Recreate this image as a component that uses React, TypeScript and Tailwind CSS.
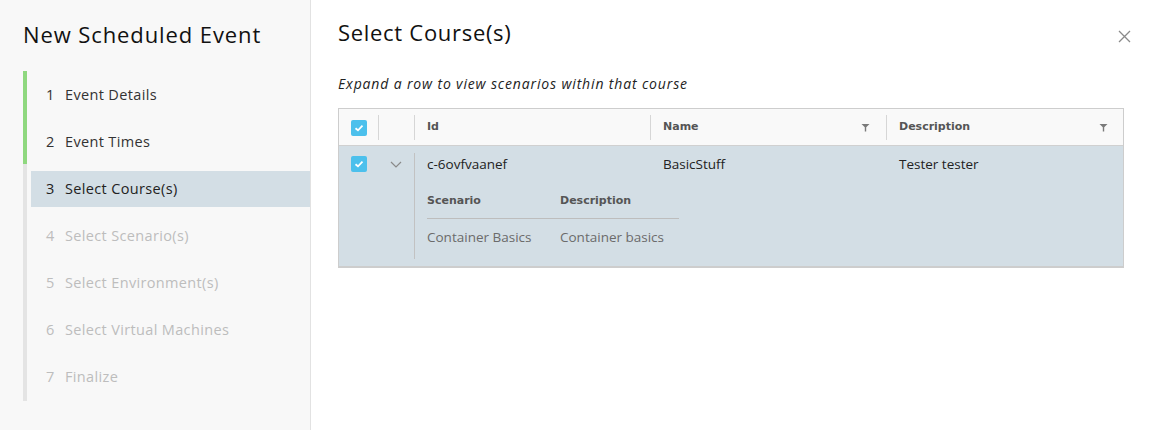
const steps = [
  { n: 1, label: "Event Details", state: "done" },
  { n: 2, label: "Event Times", state: "done" },
  { n: 3, label: "Select Course(s)", state: "active" },
  { n: 4, label: "Select Scenario(s)", state: "todo" },
  { n: 5, label: "Select Environment(s)", state: "todo" },
  { n: 6, label: "Select Virtual Machines", state: "todo" },
  { n: 7, label: "Finalize", state: "todo" },
];

const Check = () => (
  <span className="flex h-4 w-4 items-center justify-center rounded-[2px] bg-[#4cc0ec]">
    <svg width="10" height="8" viewBox="0 0 10 8" fill="none">
      <path d="M1.5 4.2 L4 6.3 L8.5 1.7" stroke="white" strokeWidth="1.8" />
    </svg>
  </span>
);

const Filter = () => (
  <svg width="9" height="9" viewBox="0 0 9 9">
    <path d="M0.5 1 H8.5 L5.2 4.2 V8.5 H3.8 V4.2 Z" fill="#7a7a7a" />
  </svg>
);

const Divider = () => <span className="h-[25px] w-px bg-[#d6d6d6]" />;

export default function App() {
  return (
    <div className="flex h-[430px] w-[1149px] bg-white font-['Open_Sans',sans-serif] text-[#222]">
      {/* Steps */}
      <aside className="flex w-[311px] shrink-0 flex-col border-r border-[#e2e2e2] bg-[#f8f8f8] pl-[23px]">
        <h1 className="mt-[19px] text-[22px] leading-[30px] tracking-[0.9px] text-[#111]">New Scheduled Event</h1>
        <div className="relative mt-[22px] flex flex-col gap-[11px] py-[6px] pl-[8px]">
          <span className="absolute left-0 top-0 h-full w-1 bg-[#e4e4e4]" />
          <span className="absolute left-0 top-0 h-[93px] w-1 bg-[#8fd87f]" />
          {steps.map((s) => (
            <div
              key={s.n}
              className={`flex h-9 items-center gap-[13px] pl-[15px] text-[14.5px] tracking-[0.35px] ${
                s.state === "active" ? "bg-[#d3dee5] text-[#222]" : s.state === "done" ? "text-[#333]" : "text-[#bdbdbd]"
              }`}
            >
              <span className="w-[6px]">{s.n}</span>
              <span>{s.label}</span>
            </div>
          ))}
        </div>
      </aside>

      {/* Content */}
      <main className="flex flex-1 flex-col pl-[27px] pr-[25px]">
        <div className="-mr-[7px] flex items-start justify-between">
          <h2 className="mt-[17px] text-[22px] leading-[30px] tracking-[0.7px] text-[#111]">Select Course(s)</h2>
          <svg className="mt-[30px]" width="13" height="13" viewBox="0 0 13 13">
            <path d="M1 1 L12 12 M12 1 L1 12" stroke="#8a8a8a" strokeWidth="1.3" />
          </svg>
        </div>
        <p className="mt-[28px] text-[14px] italic leading-[18px] tracking-[0.85px] text-[#222]">
          Expand a row to view scenarios within that course
        </p>

        <div className="mt-[15px] border border-b-2 border-[#cdcdcd]">
          <div className="flex h-[37px] items-center border-b border-[#d0d0d0] bg-[#f9f9f9] pt-[1px] text-[11px] font-bold text-[#555] font-['DejaVu_Sans',sans-serif]">
            <div className="flex w-[39px] items-center justify-center pl-[1px]">
              <Check />
            </div>
            <Divider />
            <div className="w-[35px]" />
            <Divider />
            <div className="flex w-[235px] items-center pl-3">Id</div>
            <Divider />
            <div className="flex w-[235px] items-center justify-between pl-3 pr-[16px]">
              Name <Filter />
            </div>
            <Divider />
            <div className="flex flex-1 items-center justify-between pl-3 pr-[15px]">
              Description <Filter />
            </div>
          </div>

          <div className="flex h-[120px] bg-[#d3dee5] text-[13.5px]">
            <div className="flex w-[39px] justify-center pl-[1px] pt-[10px]">
              <Check />
            </div>
            <div className="flex w-[36px] justify-center pt-[15px]">
              <svg width="12" height="7" viewBox="0 0 12 7">
                <path d="M1 1 L6 6 L11 1" stroke="#8a8a8a" strokeWidth="1.2" fill="none" />
              </svg>
            </div>
            <div className="my-[7px] flex flex-1 flex-col border-l border-[#c2c2c2]">
              <div className="flex h-[22px] items-center">
                <span className="w-[236px] pl-3">c-6ovfvaanef</span>
                <span className="w-[236px] pl-3">BasicStuff</span>
                <span className="pl-3">Tester tester</span>
              </div>
              <div className="ml-3 mt-[18px] w-[252px]">
                <div className="flex h-[26px] items-start border-b border-[#bdbdbd] text-[11px] font-bold text-[#555] font-['DejaVu_Sans',sans-serif]">
                  <span className="w-[133px]">Scenario</span>
                  <span>Description</span>
                </div>
                <div className="flex h-[36px] items-center text-[#6b6b6b]">
                  <span className="w-[133px]">Container Basics</span>
                  <span>Container basics</span>
                </div>
              </div>
            </div>
          </div>
        </div>
      </main>
    </div>
  );
}
